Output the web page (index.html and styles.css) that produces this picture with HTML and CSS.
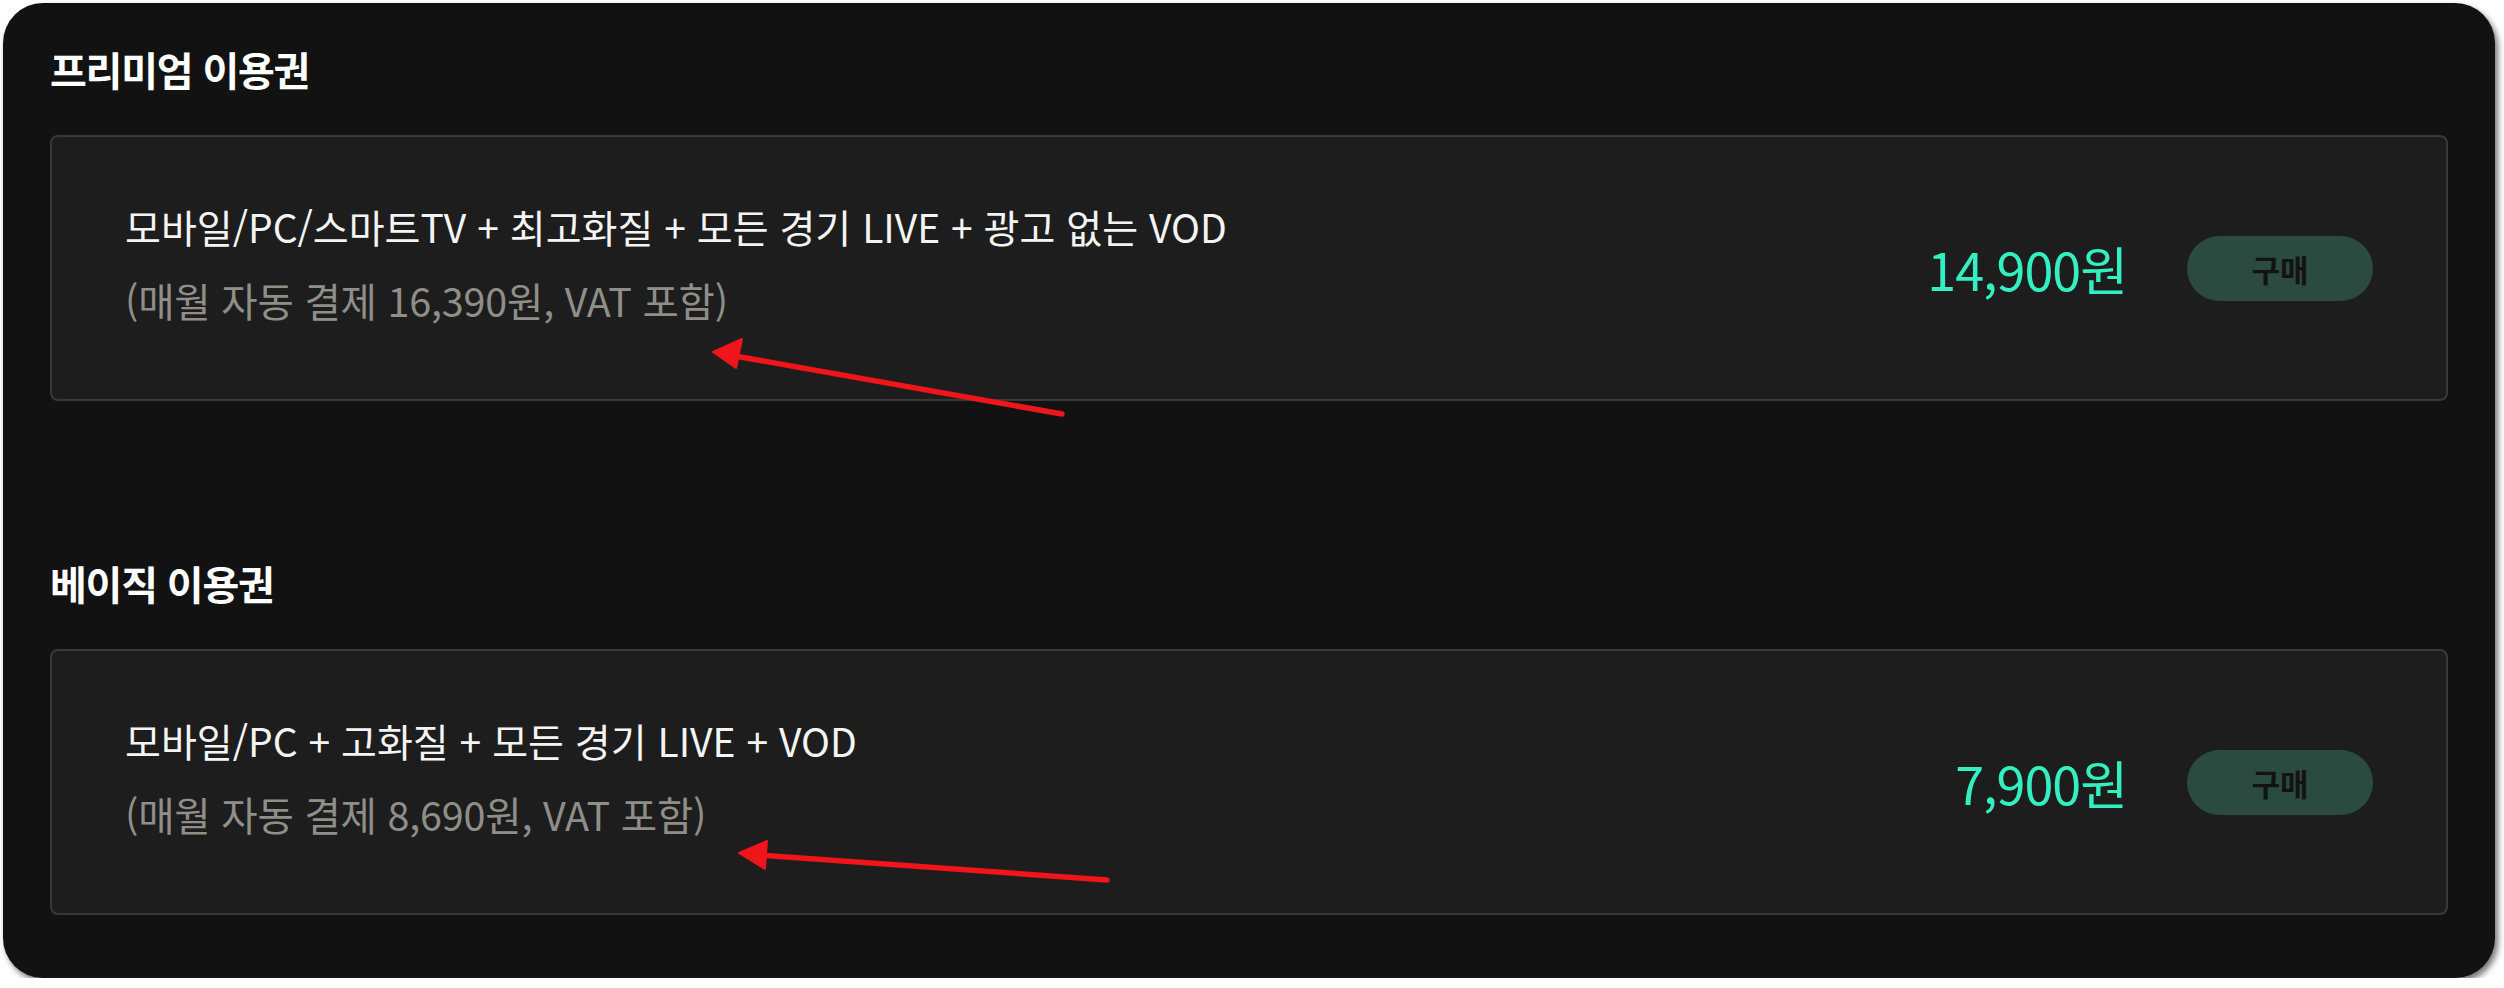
FILE: index.html
```html
<!DOCTYPE html>
<html lang="ko">

<head>
    <meta charset="UTF-8">
    <meta name="viewport" content="width=device-width, initial-scale=1.0">
    <title>이용권 구매</title>
    <link rel="stylesheet" href="styles.css">
</head>

<body>
    <div class="panel">
        <section class="plan-group">
            <h2 class="plan-title">프리미엄 이용권</h2>
            <div class="plan-card">
                <div class="plan-info">
                    <p class="plan-desc">모바일/PC/스마트TV + 최고화질 + 모든 경기 LIVE + 광고 없는 VOD</p>
                    <p class="plan-note">(매월 자동 결제 16,390원, VAT 포함)</p>
                </div>
                <div class="plan-buy">
                    <span class="plan-price">14,900원</span>
                    <button type="button" class="buy-btn">구매</button>
                </div>
            </div>
        </section>

        <section class="plan-group">
            <h2 class="plan-title">베이직 이용권</h2>
            <div class="plan-card">
                <div class="plan-info">
                    <p class="plan-desc">모바일/PC + 고화질 + 모든 경기 LIVE + VOD</p>
                    <p class="plan-note">(매월 자동 결제 8,690원, VAT 포함)</p>
                </div>
                <div class="plan-buy">
                    <span class="plan-price">7,900원</span>
                    <button type="button" class="buy-btn">구매</button>
                </div>
            </div>
        </section>

        <!-- annotation arrows drawn over the cards -->
        <svg class="marks" width="2504" height="988" viewBox="0 0 2504 988">
            <g stroke="#f0141b" stroke-width="5.5" stroke-linecap="round" fill="#f0141b">
                <line x1="1062" y1="414" x2="735" y2="356" />
                <polygon points="713,352 742,339 736,368" stroke-width="2" stroke-linejoin="round" />
                <line x1="1107" y1="880" x2="760" y2="855" />
                <polygon points="739,853 767,841 765,869" stroke-width="2" stroke-linejoin="round" />
            </g>
        </svg>
    </div>
</body>

</html>
```

FILE: styles.css
```css
body {
    margin: 0;
    background-color: #fff;
    font-family: "Noto Sans CJK KR", "Noto Sans", sans-serif;
}

.panel {
    position: relative;
    width: 2492px;
    height: 975px;
    margin: 3px 0 0 3px;
    padding: 42px 47px 0;
    box-sizing: border-box;
    background-color: #121212;
    border-radius: 40px;
    box-shadow: 3px 4px 6px rgba(0, 0, 0, 0.55);
}

.plan-group + .plan-group {
    margin-top: 158px;
}

.plan-title {
    margin: 0 0 42px;
    font-size: 40px;
    line-height: 48px;
    font-weight: 700;
    color: #fff;
    letter-spacing: -1.2px;
}

.plan-card {
    display: flex;
    align-items: center;
    justify-content: space-between;
    height: 266px;
    padding: 0 73px 0 73px;
    box-sizing: border-box;
    background-color: #1d1d1d;
    border: 2px solid #393939;
    border-radius: 8px;
}

.plan-info {
    display: flex;
    flex-direction: column;
    gap: 24px;
    padding-bottom: 10px;
}

.plan-desc,
.plan-note {
    margin: 0;
    line-height: 50px;
}

.plan-desc {
    font-size: 39px;
    color: #f4f4f4;
}

.plan-note {
    font-size: 39.5px;
    color: #8f8e89;
    letter-spacing: -0.2px;
}

.plan-buy {
    display: flex;
    align-items: center;
    gap: 60px;
}

.plan-price {
    font-size: 52px;
    color: #34efbf;
    letter-spacing: -1px;
}

.buy-btn {
    width: 186px;
    height: 65px;
    border: none;
    border-radius: 33px;
    background-color: #2b4a40;
    color: #131313;
    font-family: inherit;
    font-size: 31px;
    font-weight: 700;
    cursor: pointer;
}

.marks {
    position: absolute;
    top: -3px;
    left: -3px;
    pointer-events: none;
}
```
